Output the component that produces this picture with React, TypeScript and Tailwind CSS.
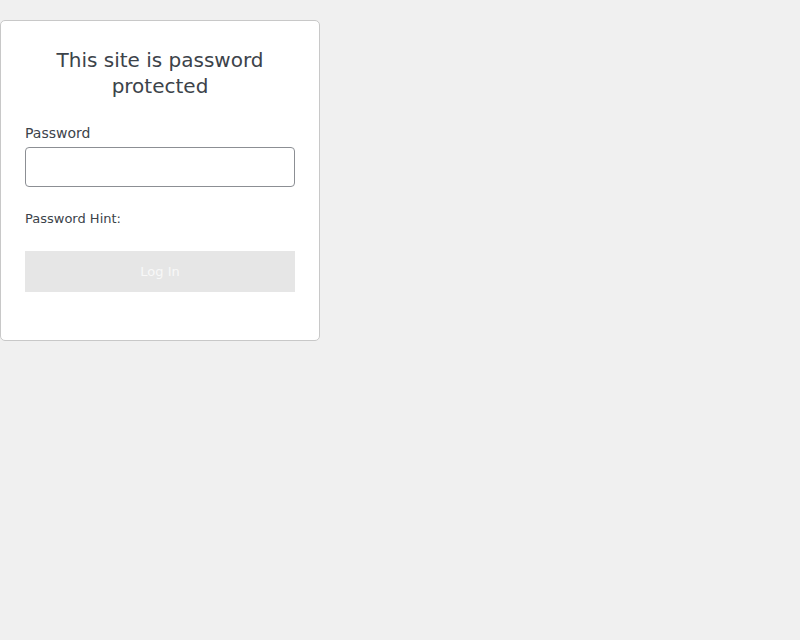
import React from 'react';

export default function App() {
  return (
    <div className="min-h-[640px] bg-[#f0f0f0] pt-5 font-['DejaVu_Sans',sans-serif]">
      <div className="w-[320px] rounded-[5px] border border-[#c8c8c8] bg-white px-6 pt-[26px] pb-12">
        <h1 className="text-center text-[20px] leading-[26px] text-[#3c434a]">This site is password protected</h1>
        <label className="mt-6 block text-[14px] leading-5 text-[#3c434a]">Password</label>
        <input type="password" className="mt-1 block h-10 w-full rounded-[4px] border border-[#8c8f94] bg-white" />
        <p className="mt-[23px] text-[13px] leading-[18px] text-[#3c434a]">Password Hint:</p>
        <button disabled className="mt-[23px] block h-[41px] w-full bg-[#e6e6e6] text-[13px] text-[#f8f8f8]">Log In</button>
      </div>
    </div>
  );
}
